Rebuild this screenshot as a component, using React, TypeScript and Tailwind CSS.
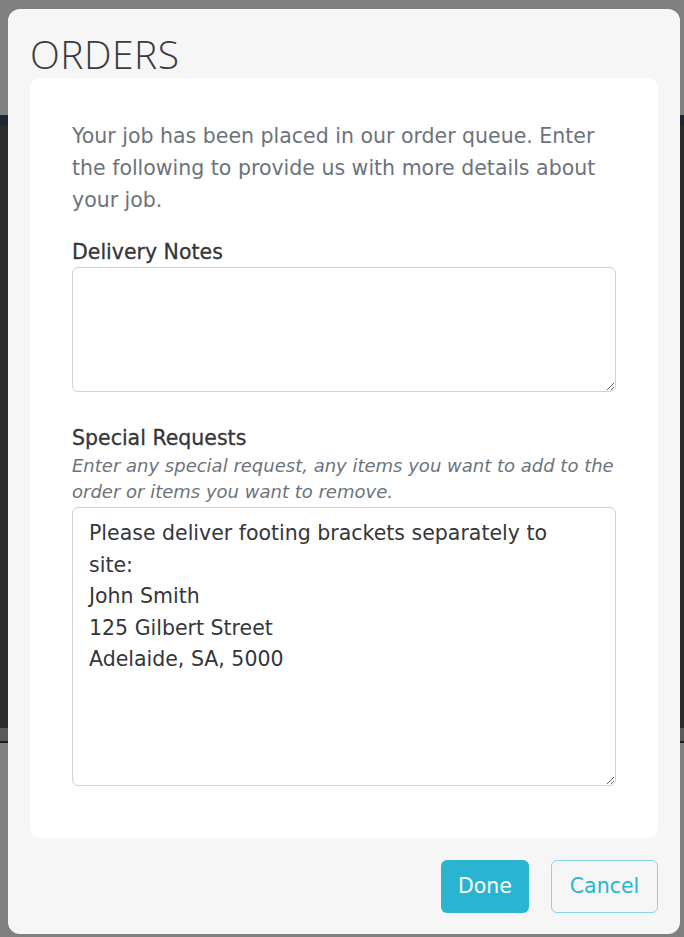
import { useState } from "react";

const requestText =
  "Please deliver footing brackets separately to site:\nJohn Smith\n125 Gilbert Street\nAdelaide, SA, 5000";

export default function App() {
  const [notes, setNotes] = useState("");
  const [requests, setRequests] = useState(requestText);

  return (
    <div className="relative min-h-[937px] w-full overflow-hidden bg-[#808080] font-['DejaVu_Sans',sans-serif]">
      {/* page behind the overlay */}
      <div className="absolute inset-x-0 top-[115px] h-[10px] bg-[#1f2631]" />
      <div className="absolute inset-x-0 top-[125px] h-[603px] bg-[#2b2b2b]" />
      <div className="absolute inset-x-0 top-[728px] h-[13px] bg-[#5a5a5a]" />
      <div className="absolute inset-x-0 top-[741px] h-[2px] bg-[#1e1e1e]" />

      {/* Modal */}
      <div className="relative pl-[8px] pr-[4px] pt-[9px]">
        <div className="flex h-[925px] flex-col rounded-[12px] bg-[#f6f6f6] px-[22px] pt-[21px]">
          <h2 className="font-['Open_Sans',sans-serif] text-[39px] font-light leading-[48px] tracking-[0.5px] text-[#3b3b3f]">
            ORDERS
          </h2>

          <div className="flex flex-col rounded-[10px] bg-white px-[42px] pt-[42px] pb-[52px]">
            <p className="text-[20.5px] leading-[32px] text-[#6c737b]">
              Your job has been placed in our order queue. Enter the following to provide us with more details about
              your job.
            </p>

            <label className="mt-[22px] text-[20.5px] leading-[28px] text-[#34363a] [-webkit-text-stroke:0.3px_currentColor]">
              Delivery Notes
            </label>
            <textarea
              value={notes}
              onChange={(e) => setNotes(e.target.value)}
              className="mt-px h-[125px] w-full resize-y rounded-[6px] border border-[#d2d2d2] px-4 py-2 text-[20.5px] leading-[31.5px] text-[#34363a] outline-none"
            />

            <label className="mt-[32px] text-[20.5px] leading-[28px] text-[#34363a] [-webkit-text-stroke:0.3px_currentColor]">
              Special Requests
            </label>
            <p className="-mr-2 mt-px text-[18px] italic leading-[26px] text-[#6c737b]">
              Enter any special request, any items you want to add to the order or items you want to remove.
            </p>
            <textarea
              value={requests}
              onChange={(e) => setRequests(e.target.value)}
              className="mt-[2px] h-[279px] w-full resize-y rounded-[6px] border border-[#d2d2d2] pl-4 pr-[30px] pt-[10px] text-[20.5px] leading-[31.5px] text-[#34363a] outline-none"
            />
          </div>

          <div className="mt-[22px] flex justify-end gap-[22px]">
            <button className="h-[53px] w-[88px] rounded-[6px] bg-[#29b5d1] text-[20.5px] text-white">Done</button>
            <button className="h-[53px] w-[107px] rounded-[6px] border border-[#86d6e8] text-[20.5px] text-[#29b5d1]">
              Cancel
            </button>
          </div>
        </div>
      </div>
    </div>
  );
}
